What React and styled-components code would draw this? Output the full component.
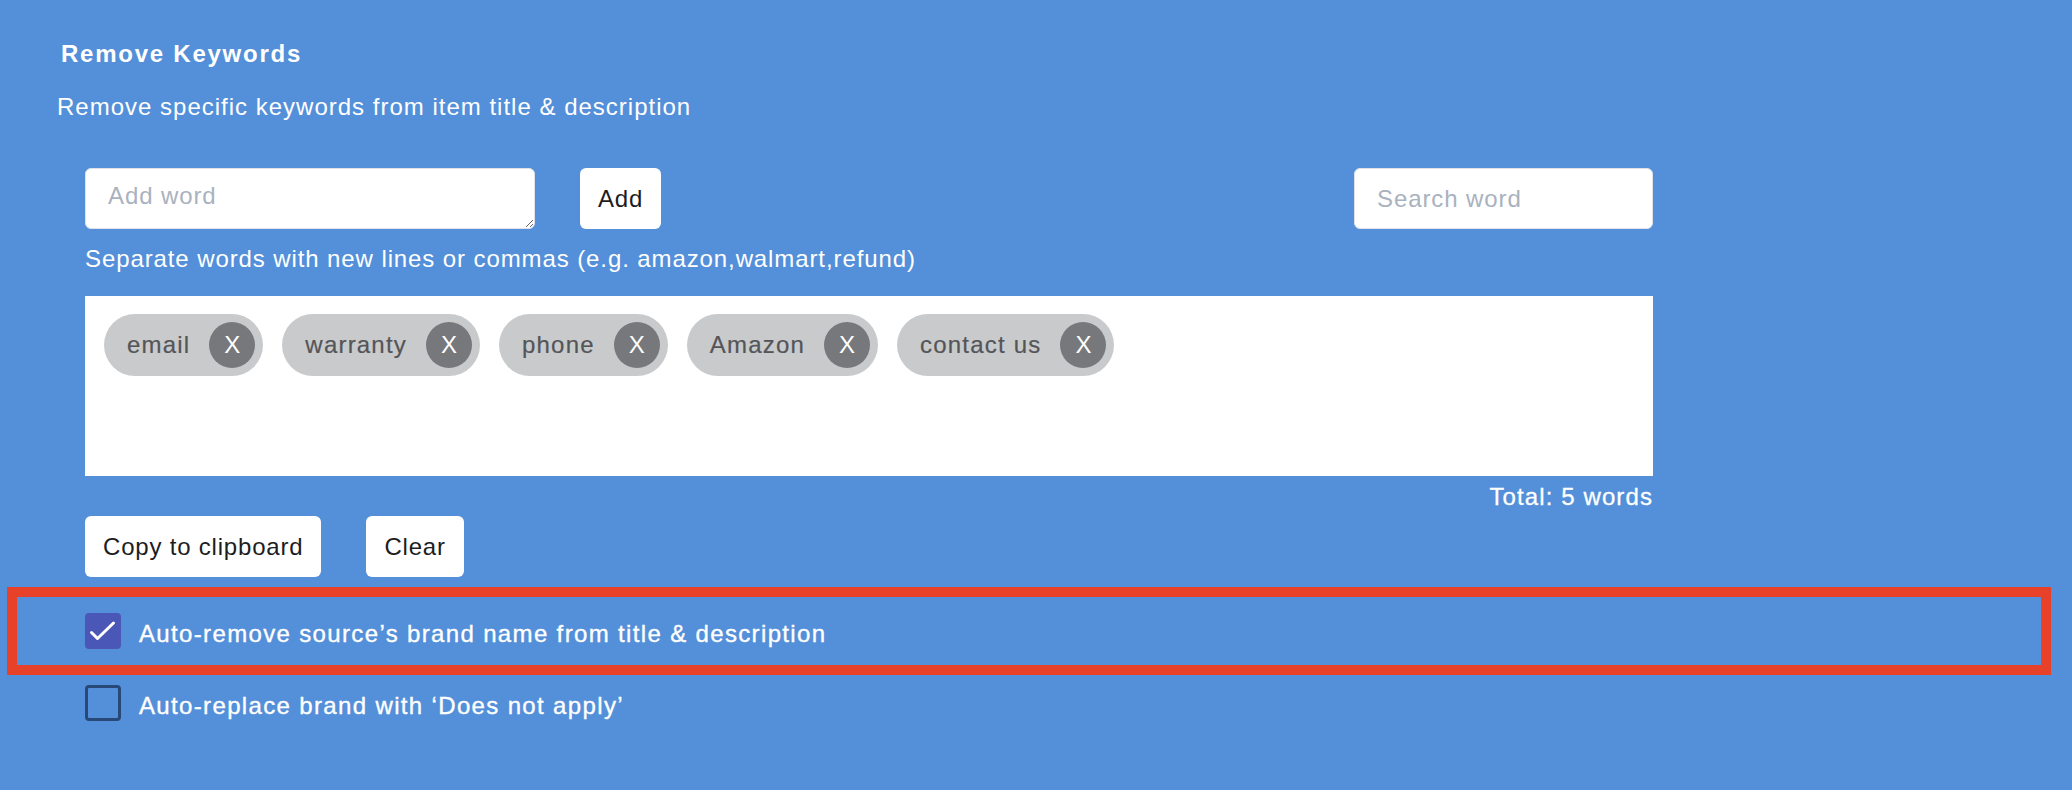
import React from 'react'
import styled, { createGlobalStyle } from 'styled-components'

const GlobalStyle = createGlobalStyle`
  html, body {
    margin: 0;
    padding: 0;
    background: #548fd9;
  }
  body {
    font-family: "Liberation Sans", Arial, sans-serif;
    -webkit-font-smoothing: antialiased;
  }
`

const words = ['email', 'warranty', 'phone', 'Amazon', 'contact us']

const App = () => (
  <Page>
    <GlobalStyle />
    <Header>
      <Title>Remove Keywords</Title>
      <Subtitle>Remove specific keywords from item title &amp; description</Subtitle>
    </Header>

    <Editor>
      <InputRow>
        <WordArea placeholder="Add word" />
        <Button>Add</Button>
        <SearchInput placeholder="Search word" />
      </InputRow>
      <Hint>Separate words with new lines or commas (e.g. amazon,walmart,refund)</Hint>

      <WordBox>
        {words.map(word => (
          <Chip key={word}>
            <ChipText>{word}</ChipText>
            <ChipRemove>X</ChipRemove>
          </Chip>
        ))}
      </WordBox>
      <Total>Total: {words.length} words</Total>

      <ButtonRow>
        <Button>Copy to clipboard</Button>
        <Button>Clear</Button>
      </ButtonRow>
    </Editor>

    <Highlight>
      <CheckRow>
        <CheckBox checked>
          <svg width="36" height="36" viewBox="0 0 36 36">
            <path d="M6.5 19.5 L12.5 25.5 L28.5 10" fill="none" stroke="#fff" strokeWidth="3" strokeLinecap="round" strokeLinejoin="round" />
          </svg>
        </CheckBox>
        <CheckLabel>Auto-remove source’s brand name from title &amp; description</CheckLabel>
      </CheckRow>
    </Highlight>

    <PlainCheck>
      <CheckRow>
        <CheckBox />
        <CheckLabel>Auto-replace brand with ‘Does not apply’</CheckLabel>
      </CheckRow>
    </PlainCheck>
  </Page>
)

export default App

const Page = styled.div`
  min-height: 790px;
  padding-top: 40px;
  box-sizing: border-box;
  color: #fff;
  font-size: 24px;
  line-height: 28px;
  letter-spacing: 0.9px;
`

const Header = styled.div`
  padding-left: 61px;
`

const Title = styled.h2`
  margin: 0;
  font-size: 24px;
  line-height: 28px;
  font-weight: 700;
  letter-spacing: 1.75px;
`

const Subtitle = styled.p`
  margin: 25px 0 0 -4px;
  letter-spacing: 1px;
`

const Editor = styled.div`
  width: 1568px;
  margin-left: 85px;
`

const InputRow = styled.div`
  display: flex;
  align-items: stretch;
  gap: 45px;
  margin-top: 47px;
  height: 61px;
`

const fieldStyle = `
  box-sizing: border-box;
  border: 1px solid #dfe3e8;
  border-radius: 6px;
  background: #fff;
  font-family: "Liberation Sans", Arial, sans-serif;
  font-size: 24px;
  line-height: 28px;
  letter-spacing: 0.9px;
  color: #222;
  outline: none;
  padding: 0 22px;

  &::placeholder {
    color: #a9b2be;
  }
`

const WordArea = styled.textarea`
  ${fieldStyle}
  width: 450px;
  height: 61px;
  padding-top: 13px;
  resize: both;
`

const SearchInput = styled.input`
  ${fieldStyle}
  width: 299px;
  height: 61px;
  margin-left: auto;
`

const Button = styled.button`
  box-sizing: border-box;
  height: 61px;
  padding: 0 18px;
  border: none;
  border-radius: 6px;
  background: #fff;
  color: #1d1d1f;
  font-family: "Liberation Sans", Arial, sans-serif;
  font-size: 24px;
  letter-spacing: 0.8px;
  cursor: pointer;
`

const Hint = styled.div`
  margin-top: 16px;
`

const WordBox = styled.div`
  box-sizing: border-box;
  height: 180px;
  margin-top: 23px;
  padding: 18px 19px;
  background: #fff;
  display: flex;
  flex-wrap: wrap;
  align-content: flex-start;
  gap: 19px;
`

const Chip = styled.div`
  display: flex;
  align-items: center;
  gap: 19px;
  height: 62px;
  box-sizing: border-box;
  padding: 8px 8px 8px 23px;
  border-radius: 31px;
  background: #c9cacc;
`

const ChipText = styled.span`
  color: #545558;
  letter-spacing: 1.2px;
  -webkit-text-stroke: 0.2px #545558;
`

const ChipRemove = styled.span`
  width: 46px;
  height: 46px;
  border-radius: 50%;
  background: #76787c;
  color: #fff;
  display: flex;
  align-items: center;
  justify-content: center;
  letter-spacing: 0;
`

const Total = styled.div`
  margin-top: 7px;
  text-align: right;
  letter-spacing: 1.1px;
  -webkit-text-stroke: 0.3px #fff;
`

const ButtonRow = styled.div`
  display: flex;
  gap: 45px;
  margin-top: 5px;
`

const Highlight = styled.div`
  margin: 10px 21px 0 7px;
  border: 10px solid #e8412a;
  padding: 16px 0 16px 68px;
`

const PlainCheck = styled.div`
  margin-top: 10px;
  padding-left: 85px;
`

const CheckRow = styled.label`
  display: flex;
  align-items: center;
  gap: 18px;
`

const CheckBox = styled.span`
  box-sizing: border-box;
  width: 36px;
  height: 36px;
  border-radius: 4px;
  flex: none;
  background: ${p => (p.checked ? '#4a57b6' : 'transparent')};
  border: ${p => (p.checked ? 'none' : '3px solid #284878')};

  svg {
    display: block;
  }
`

const CheckLabel = styled.span`
  padding-top: 6px;
  letter-spacing: 1.35px;
  -webkit-text-stroke: 0.35px #fff;
`
